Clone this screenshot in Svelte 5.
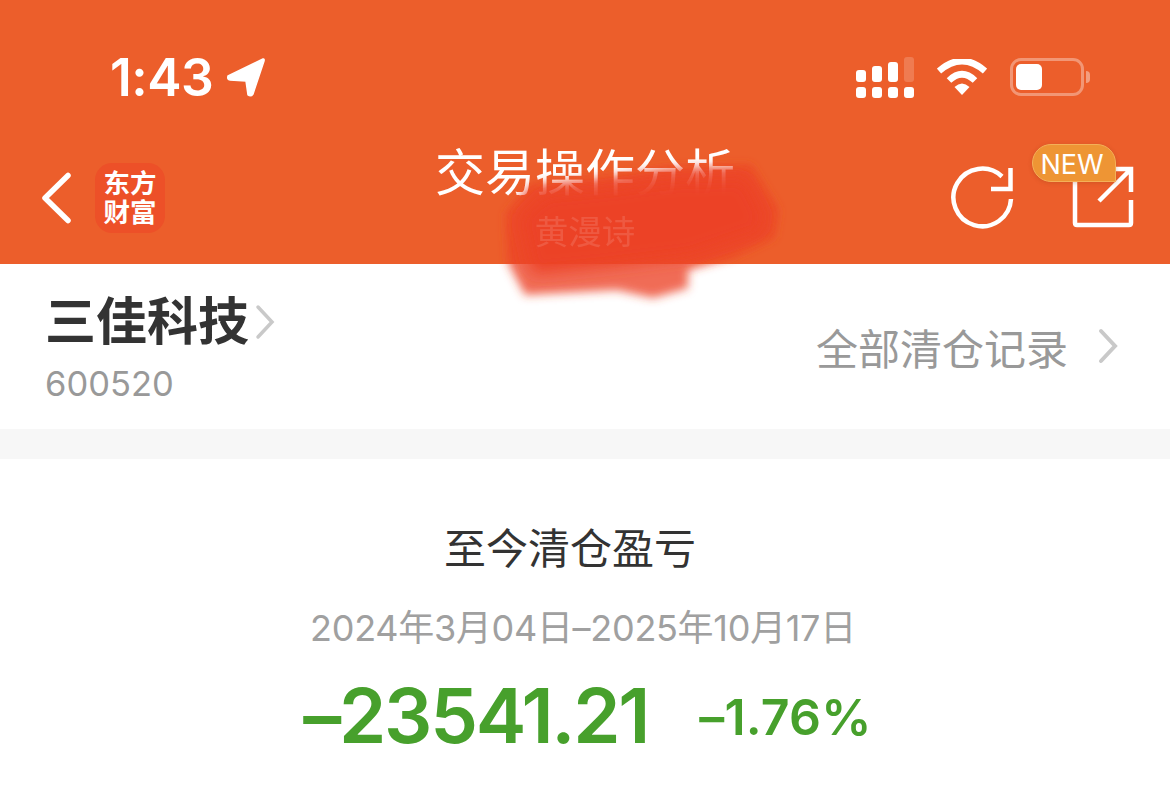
<script>
  const signalDots = [0, 1, 2, 3];
</script>

<div class="page">
  <header class="header">
    <div class="status">
      <div class="clock">
        <span>1:43</span>
        <svg class="arrow" viewBox="0 0 40 40" width="40" height="40">
          <path d="M37 2 L2 19 Q1 23 4 23 L20 24 L22 38 Q25 40 27 37 L38 4 Q38.500 1.500 37 2 Z" fill="#fff" stroke="#fff" stroke-width="1.500" stroke-linejoin="round" />
        </svg>
      </div>
      <div class="indicators">
        <div class="signal">
          <div class="row bars">
            <i class="b1"></i><i class="b2"></i><i class="b3"></i><i class="b4"></i>
          </div>
          <div class="row">
            {#each signalDots as d (d)}<i class="dot"></i>{/each}
          </div>
        </div>
        <svg class="wifi" viewBox="0 0 50 36" width="50" height="36">
          <path d="M2 12 Q25 -8 48 12" fill="none" stroke="#fff" stroke-width="6.500" />
          <path d="M12 21.500 Q25 9 38 21.500" fill="none" stroke="#fff" stroke-width="6.500" />
          <path d="M17.500 28 Q25 21 32.500 28 L25 36 Z" fill="#fff" />
        </svg>
        <div class="battery">
          <div class="cell"><div class="level"></div></div>
          <div class="cap"></div>
        </div>
      </div>
    </div>

    <nav class="nav">
      <div class="nav-left">
        <svg class="back" viewBox="0 0 34 54" width="34" height="54">
          <path d="M28 4.500 L5 27 L28 49.500" fill="none" stroke="#fff" stroke-width="5.500" stroke-linecap="round" stroke-linejoin="round" />
        </svg>
        <div class="logo"><span>东方</span><span>财富</span></div>
      </div>
      <div class="titles">
        <div class="title">交易操作分析</div>
        <div class="subtitle">黄漫诗</div>
      </div>
      <div class="nav-right">
        <svg class="refresh" viewBox="0 0 64 64" width="64" height="64">
          <path d="M60 33 A28.800 28.800 0 1 1 51 10.500" fill="none" stroke="#fff" stroke-width="4.500" />
          <path d="M59.500 2 L59.500 23 L40 23" fill="none" stroke="#fff" stroke-width="4.500" />
        </svg>
        <div class="share">
          <svg viewBox="0 0 62 62" width="62" height="62">
            <path d="M30 7 L3 7 L3 57 Q3 59 5 59 L57 59 Q59 59 59 57 L59 34" fill="none" stroke="#fff" stroke-width="4.500" stroke-linejoin="round" />
            <path d="M59 26 L59 3 L37 3 M59 3 L27 35" fill="none" stroke="#fff" stroke-width="4.500" />
          </svg>
          <span class="badge">NEW</span>
        </div>
      </div>
    </nav>
  </header>

  <section class="stock">
    <div class="stock-info">
      <div class="stock-name">
        <span>三佳科技</span>
        <svg viewBox="0 0 20 36" width="20" height="36">
          <path d="M3 3 L17 18 L3 33" fill="none" stroke="#c9c9c9" stroke-width="3.500" stroke-linecap="round" />
        </svg>
      </div>
      <div class="stock-code">600520</div>
    </div>
    <div class="history">
      <span>全部清仓记录</span>
      <svg viewBox="0 0 20 36" width="20" height="36">
        <path d="M3 3 L17 18 L3 33" fill="none" stroke="#c9c9c9" stroke-width="4" stroke-linecap="round" />
      </svg>
    </div>
  </section>

  <div class="band"></div>

  <section class="summary">
    <div class="summary-title">至今清仓盈亏</div>
    <div class="range">2024年3月04日–2025年10月17日</div>
    <div class="result">
      <span class="amount">–23541.21</span>
      <span class="percent">–1.76%</span>
    </div>
  </section>

  <!-- red marker scribble lying over the title -->
  <svg class="scribble" viewBox="0 0 320 190" width="320" height="190">
    <defs>
      <filter id="soft" x="-15%" y="-15%" width="130%" height="130%">
        <feGaussianBlur stdDeviation="5" />
      </filter>
      <filter id="softer" x="-15%" y="-15%" width="130%" height="130%">
        <feGaussianBlur stdDeviation="8" />
      </filter>
    </defs>
    <path
      d="M36 74 L60 45 L130 38 L197 28 L280 25 L308 70 L304 97 L262 117 L218 130 L218 148 L183 158 L147 150 L55 155 L38 123 Z"
      fill="#ec4327"
      fill-opacity="0.78"
      filter="url(#soft)"
    />
    <path
      d="M50 78 L75 54 L140 48 L200 40 L275 38 L294 75 L290 92 L220 116 L140 126 L62 134 Z"
      fill="#ec4327"
      filter="url(#softer)"
    />
  </svg>
</div>

<style>
  :global(body) {
    margin: 0;
    background: #fff;
  }

  .page {
    position: relative;
    width: 1170px;
    height: 808px;
    overflow: hidden;
    font-family: Inter, "Noto Sans CJK SC", sans-serif;
  }

  .header {
    height: 264px;
    background: #ec5e2b;
    color: #fff;
    display: flex;
    flex-direction: column;
  }

  .status {
    height: 130px;
    padding: 47px 80px 0 110px;
    box-sizing: border-box;
    display: flex;
    justify-content: space-between;
    align-items: flex-start;
  }

  .clock {
    display: flex;
    align-items: center;
    gap: 13px;
    height: 60px;
    font-size: 51.500px;
    font-weight: 600;
    letter-spacing: -0.5px;
  }

  .indicators {
    display: flex;
    align-items: center;
    gap: 23px;
    height: 56px;
    margin-top: 2px;
  }

  .signal {
    display: flex;
    flex-direction: column;
    gap: 5px;
    width: 58px;
  }

  .row {
    display: flex;
    justify-content: space-between;
    align-items: flex-end;
  }

  .row i {
    display: block;
    width: 10px;
    background: #fff;
    border-radius: 3px;
  }

  .row .dot {
    height: 11px;
  }

  .bars .b1 {
    height: 12px;
  }

  .bars .b2 {
    height: 16px;
  }

  .bars .b3 {
    height: 20px;
  }

  .bars .b4 {
    height: 25px;
    background: rgba(255, 255, 255, 0.18);
  }

  .battery {
    display: flex;
    align-items: center;
    gap: 2px;
  }

  .cell {
    width: 74px;
    height: 38px;
    box-sizing: border-box;
    border: 3px solid rgba(255, 255, 255, 0.35);
    border-radius: 11px;
    padding: 3px;
  }

  .level {
    width: 26px;
    height: 100%;
    background: #fff;
    border-radius: 5px;
  }

  .cap {
    width: 4px;
    height: 12px;
    background: rgba(255, 255, 255, 0.4);
    border-radius: 0 6px 6px 0;
  }

  .nav {
    flex: 1;
    position: relative;
    display: flex;
    justify-content: space-between;
    align-items: flex-start;
    padding: 0 36px 0 40px;
  }

  .nav-left {
    display: flex;
    align-items: center;
    gap: 21px;
    margin-top: 33px;
  }

  .logo {
    width: 70px;
    height: 70px;
    border-radius: 17px;
    background: #ed5028;
    display: flex;
    flex-direction: column;
    align-items: center;
    justify-content: center;
    font-size: 26.500px;
    line-height: 29px;
    font-weight: 600;
  }

  .titles {
    position: absolute;
    left: 0;
    right: 0;
    top: 12px;
    text-align: center;
  }

  .title {
    font-size: 50px;
    line-height: 62px;
  }

  .subtitle {
    position: relative;
    z-index: 2;
    margin-top: 6px;
    font-size: 33.500px;
    line-height: 44px;
    opacity: 0.12;
  }

  .nav-right {
    display: flex;
    align-items: flex-start;
    gap: 57px;
    margin-top: 36px;
  }

  .share {
    position: relative;
  }

  .badge {
    position: absolute;
    right: 18px;
    top: -22px;
    width: 84px;
    height: 38px;
    box-sizing: border-box;
    padding: 2px 4px 0 0;
    border: 1px solid #f4b058;
    border-radius: 19px 19px 0 19px;
    background: #ee9534;
    box-shadow: 0 1px 4px rgba(150, 60, 20, 0.3);
    display: flex;
    align-items: center;
    justify-content: center;
    font-size: 27px;
    font-weight: 400;
  }

  .stock {
    height: 165px;
    background: #fff;
    display: flex;
    justify-content: space-between;
    padding: 0 52px 0 45px;
  }

  .stock-info {
    padding-top: 28px;
  }

  .stock-name {
    display: flex;
    align-items: center;
    gap: 6px;
    font-size: 51px;
    line-height: 60px;
    font-weight: 700;
    color: #333;
  }

  .stock-code {
    margin-top: 9px;
    font-size: 34.500px;
    line-height: 46px;
    color: #999;
  }

  .history {
    display: flex;
    align-items: center;
    gap: 30px;
    height: 60px;
    margin-top: 52px;
    font-size: 42px;
    color: #999;
  }

  .band {
    height: 30px;
    background: #f7f7f7;
  }

  .summary {
    background: #fff;
    display: flex;
    flex-direction: column;
    align-items: center;
    padding-top: 64px;
  }

  .summary-title {
    margin-right: 30px;
    font-size: 42px;
    line-height: 52px;
    color: #333;
  }

  .range {
    margin-top: 29px;
    margin-right: 4px;
    font-size: 36px;
    line-height: 48px;
    letter-spacing: -0.3px;
    color: #a0a0a0;
  }

  .result {
    display: flex;
    align-items: center;
    gap: 51px;
    margin-top: 19px;
    margin-left: 5px;
    color: #47a02c;
    font-weight: 600;
  }

  .amount {
    font-size: 76px;
    line-height: 88px;
    letter-spacing: -2.300px;
  }

  .percent {
    margin-top: 4px;
    font-size: 50px;
    line-height: 60px;
    letter-spacing: 0.2px;
  }

  .scribble {
    position: absolute;
    left: 470px;
    top: 140px;
    z-index: 1;
    pointer-events: none;
  }
</style>
